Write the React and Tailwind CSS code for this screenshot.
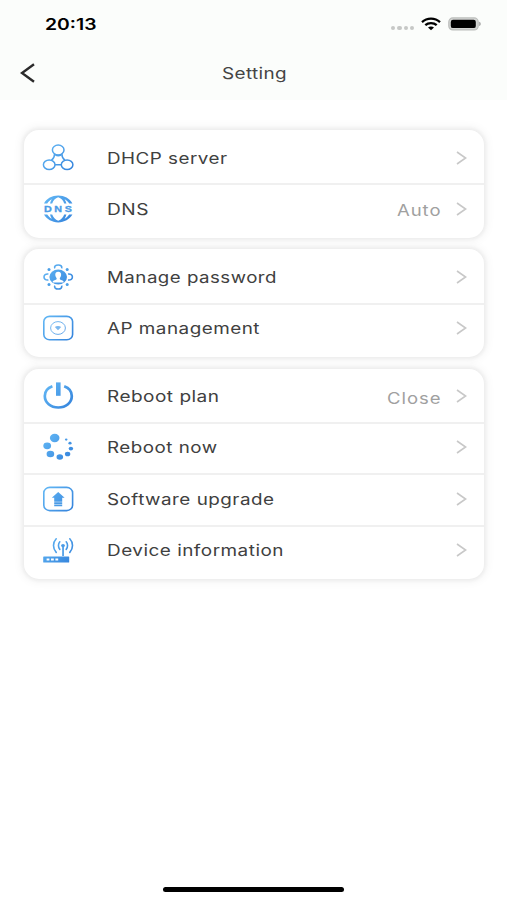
import React from "react";

const STROKE = "url(#blue)";

function DhcpIcon() {
  return (
    <g fill="none" stroke={STROKE} strokeWidth="1.5">
      <path d="M12.6 11.8C12.6 14.6 11.4 16.8 9.4 18.4M19.8 11.8C19.8 14.6 21 16.8 23 18.4M13 22.8H19.2" />
      <path d="M13.4 13C15.2 13.8 17.2 13.8 19 13" />
      <ellipse cx="16.2" cy="8" rx="5.8" ry="4.9" />
      <ellipse cx="7.2" cy="22.8" rx="5.8" ry="4.8" />
      <ellipse cx="25.1" cy="22.8" rx="5.8" ry="4.8" />
    </g>
  );
}

function DnsIcon() {
  return (
    <g>
      <path
        d="M2 10.4C4.8 5.6 10 2.6 16.2 2.6S27.6 5.6 30.4 10.4H27.2C25.8 8.4 24.4 7.2 22.6 6.2C23.4 7.4 24 8.8 24.4 10.4H22.2C21.2 7.4 19.2 5.2 16.2 4.2C13.2 5.2 11.2 7.4 10.2 10.4H8C8.4 8.8 9 7.4 9.8 6.2C8 7.2 6.6 8.4 5.2 10.4Z"
        fill={STROKE}
      />
      <path
        d="M2 21.6C4.8 26.4 10 29.4 16.2 29.4S27.6 26.4 30.4 21.6H27.2C25.8 23.6 24.4 24.8 22.6 25.8C23.4 24.6 24 23.2 24.4 21.6H22.2C21.2 24.6 19.2 26.8 16.2 27.8C13.2 26.8 11.2 24.6 10.2 21.6H8C8.4 23.2 9 24.6 9.8 25.8C8 24.8 6.6 23.6 5.2 21.6Z"
        fill={STROKE}
      />
      <text
        x="2"
        y="19.2"
        textLength="30.4"
        lengthAdjust="spacingAndGlyphs"
        fill="#4a9be6"
        stroke="#4a9be6"
        strokeWidth="0.3"
        className="font-['Liberation_Sans'] text-[9.2px] font-bold tracking-[2.2px]"
      >
        DNS
      </text>
    </g>
  );
}

function PasswordIcon() {
  return (
    <g>
      <g fill="none" stroke={STROKE} strokeWidth="1.6">
        <path d="M12.8 7.4C12 5.4 13.6 4 16.2 4S20.4 5.4 19.6 7.4M12.8 24.6C12 26.6 13.6 28 16.2 28S20.4 26.6 19.6 24.6" />
        <path d="M6.4 13C3.6 12.6 2 14 2 16S3.6 19.4 6.4 19M26 13C28.8 12.6 30.4 14 30.4 16S28.8 19.4 26 19" />
      </g>
      <ellipse cx="16.2" cy="16" rx="8.8" ry="7.5" fill={STROKE} />
      <path
        d="M16.2 10.8C18.4 10.8 19.3 12.2 19.1 14C19 15.4 18.4 16.2 17.8 17V18C18.2 19.2 21.6 19 21.8 21.4H10.6C10.8 19 14.2 19.2 14.6 18V17C14 16.2 13.4 15.4 13.3 14C13.1 12.2 14 10.8 16.2 10.8Z"
        fill="#fff"
      />
      <g fill="#4a9fe8">
        <circle cx="7" cy="8.6" r="1.5" />
        <circle cx="25.2" cy="8.6" r="1.5" />
        <circle cx="7" cy="23.4" r="1.5" />
        <circle cx="25.2" cy="23.4" r="1.5" />
      </g>
    </g>
  );
}

function ApIcon() {
  return (
    <g fill="none" stroke={STROKE}>
      <rect x="1.8" y="4.4" width="28.8" height="23.4" rx="5.8" ry="5.2" strokeWidth="1.6" />
      <ellipse cx="16" cy="16" rx="7.4" ry="6.4" strokeWidth="1" opacity="0.8" />
      <path d="M12.8 15C14.4 13.6 17.6 13.6 19.2 15L16 18.2Z" fill="#7bb8ef" stroke="none" />
    </g>
  );
}

function PowerIcon() {
  return (
    <g>
      <path
        d="M10.4 6.2C5.4 8 2.8 11.8 2.8 16C2.8 22.6 8.6 27.5 16.3 27.5S29.8 22.6 29.8 16C29.8 11.8 27.2 8 22.2 6.2"
        fill="none"
        stroke={STROKE}
        strokeWidth="2.7"
      />
      <rect x="14" y="2.4" width="4.6" height="13.4" fill={STROKE} />
    </g>
  );
}

function LoadingIcon() {
  return (
    <g fill={STROKE}>
      <ellipse cx="12.7" cy="7" rx="4.8" ry="4.2" />
      <ellipse cx="5.2" cy="14.8" rx="3.9" ry="3.4" />
      <ellipse cx="8.4" cy="23" rx="3.8" ry="3.3" />
      <ellipse cx="17.8" cy="26" rx="3.3" ry="2.8" />
      <ellipse cx="25.6" cy="23" rx="2.7" ry="2.3" />
      <ellipse cx="28.9" cy="17.6" rx="2.2" ry="1.9" />
      <ellipse cx="28" cy="12.2" rx="1.6" ry="1.4" />
      <ellipse cx="24.2" cy="8.6" rx="1.3" ry="1.1" />
    </g>
  );
}

function UpgradeIcon() {
  return (
    <g>
      <rect
        x="1.8"
        y="4.4"
        width="28.8"
        height="23.2"
        rx="6"
        ry="5.4"
        fill="none"
        stroke={STROKE}
        strokeWidth="1.6"
      />
      <path d="M16.2 9L22.6 14.8H20.2V18.8H12.2V14.8H9.8Z" fill={STROKE} />
      <path d="M12.2 19.3H20.2V21H12.2ZM12.2 21.5H20.2V23.2H12.2Z" fill="#4a9be6" />
    </g>
  );
}

function RouterIcon() {
  return (
    <g>
      <rect x="1.2" y="22.4" width="26" height="6.2" rx="0.6" fill={STROKE} />
      <path d="M4.6 24.4h2.8v2.2H4.6zM9 24.4h2.8v2.2H9zM13.4 24.4h2.8v2.2h-2.8z" fill="#fff" />
      <path d="M20.2 12.4h1.7V22h-1.7z" fill="#4a9be6" />
      <ellipse cx="21" cy="11.6" rx="1.9" ry="1.7" fill="#4a9be6" />
      <g fill="none" stroke={STROKE} strokeWidth="1.6" strokeLinecap="round">
        <path d="M17.8 7.8C16 9.8 16 13.4 17.8 15.4M24.2 7.8C26 9.8 26 13.4 24.2 15.4" />
        <path d="M14.2 4.8C10.6 8.6 10.6 14.6 14.2 18.4M27.8 4.8C31.4 8.6 31.4 14.6 27.8 18.4" />
      </g>
    </g>
  );
}

const GROUPS = [
  [
    { label: "DHCP server", width: 120.5, Icon: DhcpIcon },
    { label: "DNS", width: 42, Icon: DnsIcon, value: "Auto", valueWidth: 44.5 }
  ],
  [
    { label: "Manage password", width: 170, Icon: PasswordIcon },
    { label: "AP management", width: 153, Icon: ApIcon }
  ],
  [
    { label: "Reboot plan", width: 112.5, Icon: PowerIcon, value: "Close", valueWidth: 54.5 },
    { label: "Reboot now", width: 110.5, Icon: LoadingIcon },
    { label: "Software upgrade", width: 167.5, Icon: UpgradeIcon },
    { label: "Device information", width: 177, Icon: RouterIcon }
  ]
];

// Wide text: the glyphs are stretched so that the line fills the given width
function WideText({ children, width, className }) {
  return (
    <svg width={width + 2} height="24" className={`shrink-0 overflow-visible ${className}`}>
      <text x="0" y="17.5" textLength={width} lengthAdjust="spacingAndGlyphs" fill="currentColor">
        {children}
      </text>
    </svg>
  );
}

function Row({ item, first }) {
  const { Icon } = item;
  return (
    <div
      className={`flex h-[51.4px] items-center pl-[18px] pr-[17px] ${
        first ? "" : "border-t-2 border-[#f0f0f0] pb-[3px]"
      }`}
    >
      <svg width="32" height="32" viewBox="0 0 32 32" className="shrink-0">
        <Icon />
      </svg>
      <WideText width={item.width} className="ml-[33px] text-[15.5px] tracking-[0.4px] text-[#404040]">
        {item.label}
      </WideText>
      <div className="flex-1" />
      {item.value && (
        <WideText
          width={item.valueWidth}
          className="mr-[13px] mt-[3px] text-[15.5px] tracking-[0.8px] text-[#a0a0a0]"
        >
          {item.value}
        </WideText>
      )}
      <svg width="11" height="14" viewBox="0 0 11 14" className="shrink-0">
        <path d="M1 1L9.6 7L1 13" fill="none" stroke="#c8c8c8" strokeWidth="1.6" />
      </svg>
    </div>
  );
}

export default function App() {
  return (
    <div className="flex h-[900px] w-[507px] flex-col overflow-hidden bg-white font-['Inter','Liberation_Sans',sans-serif]">
      <svg width="0" height="0" className="absolute">
        <defs>
          <linearGradient id="blue" gradientUnits="userSpaceOnUse" x1="2" y1="4" x2="30" y2="28">
            <stop offset="0" stopColor="#63b8f5" />
            <stop offset="1" stopColor="#3483dc" />
          </linearGradient>
        </defs>
      </svg>

      <header className="h-[100px] shrink-0 bg-[#fbfdfb]">
        <div className="flex h-[47px] items-center pl-[45px] pr-[26px]">
          <WideText width={51.5} className="text-[15.5px] font-semibold text-black">
            20:13
          </WideText>
          <div className="flex-1" />
          <div className="mt-[8px] flex gap-[2px]">
            {[0, 1, 2, 3].map((i) => (
              <div key={i} className="h-[4px] w-[4.2px] rounded-full bg-[#c6c8c6]" />
            ))}
          </div>
          <svg width="20" height="14" viewBox="0 0 20 14" className="ml-[7px]">
            <g fill="none" stroke="#000" strokeWidth="2.3">
              <path d="M1 5.2C6 .5 14 .5 19 5.2" />
              <path d="M4.3 8.2C7.4 5.4 12.6 5.4 15.7 8.2" />
            </g>
            <path d="M7 10.5C8.6 9 11.4 9 13 10.5L10 13.2Z" />
          </svg>
          <svg width="33" height="14" viewBox="0 0 33 14" className="ml-[7px]">
            <rect x="0.8" y="0.9" width="29.4" height="12" rx="4" fill="#d4d6d4" stroke="#bcbebc" strokeWidth="1.2" />
            <rect x="2.8" y="2.7" width="25" height="8.4" rx="2.2" />
            <path d="M31.2 4.8C33.2 5.4 33.2 8.4 31.2 9Z" fill="#a0a2a0" />
          </svg>
        </div>
        <div className="flex h-[53px] items-start pl-[20px]">
          <svg width="16" height="20" viewBox="0 0 16 20" className="mt-[16px]">
            <path d="M14 1.2L2 10L14 18.8" fill="none" stroke="#2b2b2b" strokeWidth="2.4" />
          </svg>
          <WideText width={65} className="ml-[186px] mt-[14px] text-[15.5px] tracking-[0.3px] text-[#444]">
            Setting
          </WideText>
        </div>
      </header>

      <main className="flex flex-col gap-[11.5px] pl-[24px] pr-[23px] pt-[30px]">
        {GROUPS.map((items, i) => (
          <section
            key={i}
            className="rounded-[15px] bg-white pb-[3px] pt-[2px] shadow-[0_0_3px_2px_#eeeeee,0_0_9px_4px_#f6f6f6]"
          >
            {items.map((item, j) => (
              <Row key={item.label} item={item} first={j === 0} />
            ))}
          </section>
        ))}
      </main>

      <div className="mx-auto mb-[8px] mt-auto h-[5px] w-[181px] rounded-full bg-black" />
    </div>
  );
}
